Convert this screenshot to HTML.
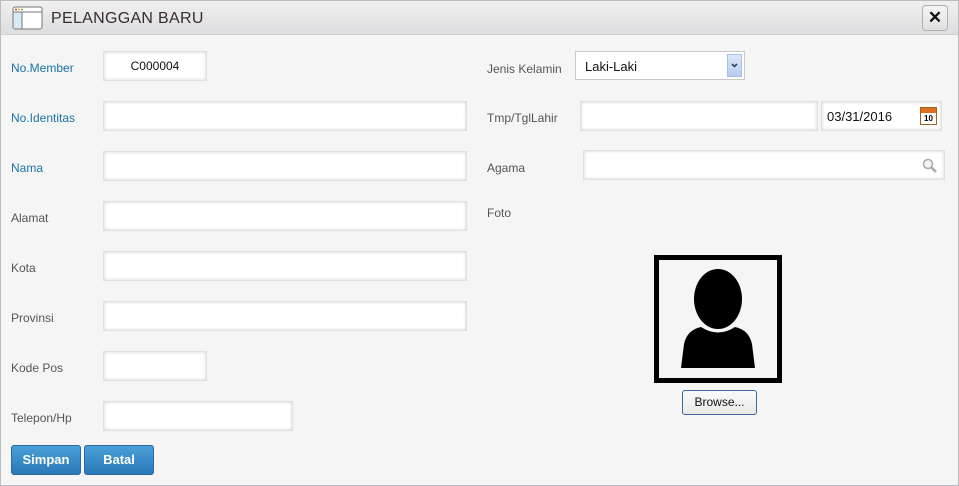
<!DOCTYPE html>
<html><head><style>
*{box-sizing:border-box;margin:0;padding:0}
body{width:959px;height:486px;background:#f5f5f5;font-family:"Liberation Sans",Arial,sans-serif;font-size:12px;position:relative;overflow:hidden}
.frame{position:absolute;left:0;top:0;width:959px;height:486px;border:1px solid #b9bcc0}
.hdr{position:absolute;left:1px;top:1px;width:957px;height:34px;background:linear-gradient(#f0f0f0,#dcdddf);border-bottom:1px solid #d0d0d0}
.title{position:absolute;left:50px;top:9px;font-size:16px;color:#3a2a32;letter-spacing:.3px}
.lbl{position:absolute;color:#555;font-size:12px}
.blue{color:#1a73a8}
.inp{position:absolute;background:#fff;border:1px solid #e0e0e0;box-shadow:inset 0 0 3px #d0d0d0;height:30px}
.btn{position:absolute;top:445px;height:30px;background:linear-gradient(#4aa0d8,#2a78b8);border:1px solid #2a6aa0;border-radius:3px;color:#fff;font-weight:bold;font-size:13px;text-align:center;line-height:28px}
</style></head><body>
<div class="frame"></div>
<div class="hdr">
<svg style="position:absolute;left:11px;top:5px" width="31" height="24"><rect x="1" y="1" width="29" height="22" rx="2" fill="#fff" stroke="#777"/><rect x="1.5" y="6" width="8" height="16.5" fill="#d6eaf8"/><line x1="1" y1="6" x2="30" y2="6" stroke="#777"/><line x1="10" y1="6" x2="10" y2="23" stroke="#777"/><circle cx="4" cy="3.5" r="1" fill="#d33"/><circle cx="7" cy="3.5" r="1" fill="#db3"/><circle cx="10" cy="3.5" r="1" fill="#6b3"/></svg>
<div class="title">PELANGGAN BARU</div>
<div style="position:absolute;left:921px;top:4px;width:26px;height:26px;border:1px solid #b0b0b0;border-radius:4px;background:linear-gradient(#f4f4f4,#e0e0e0);text-align:center;line-height:24px;font-weight:bold;font-size:17px;color:#111">✕</div>
</div>

<div class="lbl blue" style="left:11px;top:61px">No.Member</div>
<div class="inp" style="left:103px;top:51px;width:104px;text-align:center;line-height:28px;color:#111">C000004</div>
<div class="lbl blue" style="left:11px;top:111px">No.Identitas</div>
<div class="inp" style="left:103px;top:101px;width:364px"></div>
<div class="lbl blue" style="left:11px;top:161px">Nama</div>
<div class="inp" style="left:103px;top:151px;width:364px"></div>
<div class="lbl" style="left:11px;top:211px">Alamat</div>
<div class="inp" style="left:103px;top:201px;width:364px"></div>
<div class="lbl" style="left:11px;top:261px">Kota</div>
<div class="inp" style="left:103px;top:251px;width:364px"></div>
<div class="lbl" style="left:11px;top:311px">Provinsi</div>
<div class="inp" style="left:103px;top:301px;width:364px"></div>
<div class="lbl" style="left:11px;top:361px">Kode Pos</div>
<div class="inp" style="left:103px;top:351px;width:104px"></div>
<div class="lbl" style="left:11px;top:411px">Telepon/Hp</div>
<div class="inp" style="left:103px;top:401px;width:190px"></div>

<div class="lbl" style="left:487px;top:62px">Jenis Kelamin</div>
<div style="position:absolute;left:575px;top:51px;width:170px;height:29px;background:#fff;border:1px solid #c8c8c8"><span style="position:absolute;left:9px;top:7px;font-size:13px;color:#111">Laki-Laki</span><div style="position:absolute;right:2px;top:2px;width:15px;height:23px;background:linear-gradient(#dce8fb,#b5cdf2);border:1px solid #a8c0e8"><svg width="13" height="21"><path d="M4 9 L6.5 11.5 L9 9" fill="none" stroke="#345" stroke-width="1.6"/></svg></div></div>
<div class="lbl" style="left:487px;top:111px">Tmp/TglLahir</div>
<div class="inp" style="left:580px;top:101px;width:238px"></div>
<div class="inp" style="left:821px;top:101px;width:121px"><span style="position:absolute;left:5px;top:7px;font-size:13px;color:#111">03/31/2016</span>
<div style="position:absolute;left:98px;top:5px;width:17px;height:18px;border:1px solid #a0601a;background:#fff"><div style="height:5px;background:#e07020"></div><div style="font-size:8px;font-weight:bold;text-align:center;line-height:11px">10</div></div></div>
<div class="lbl" style="left:487px;top:161px">Agama</div>
<div class="inp" style="left:583px;top:150px;width:362px"><svg style="position:absolute;right:6px;top:7px" width="16" height="16"><circle cx="6" cy="6" r="4.5" fill="#f4f4f4" stroke="#aaa" stroke-width="1.5"/><path d="M9.5 9.5 L14 14" stroke="#aaa" stroke-width="2.5"/></svg></div>
<div class="lbl" style="left:487px;top:206px">Foto</div>

<div style="position:absolute;left:654px;top:255px;width:128px;height:128px;border:5px solid #000;background:#f5f5f5">
<svg width="118" height="118" style="position:absolute;left:0;top:0"><ellipse cx="59" cy="39" rx="24" ry="30" fill="#000"/><path d="M22 108 L25 84 Q28 70 42 67 Q59 78 76 67 Q90 70 93 84 L96 108 Z" fill="#000"/></svg></div>
<div style="position:absolute;left:682px;top:390px;width:75px;height:25px;border:1px solid #3a6a9a;border-radius:3px;background:linear-gradient(#fafafa,#e8e8e8);text-align:center;line-height:23px;font-size:12px;color:#111">Browse...</div>

<div class="btn" style="left:11px;width:70px">Simpan</div>
<div class="btn" style="left:84px;width:70px">Batal</div>
</body></html>
